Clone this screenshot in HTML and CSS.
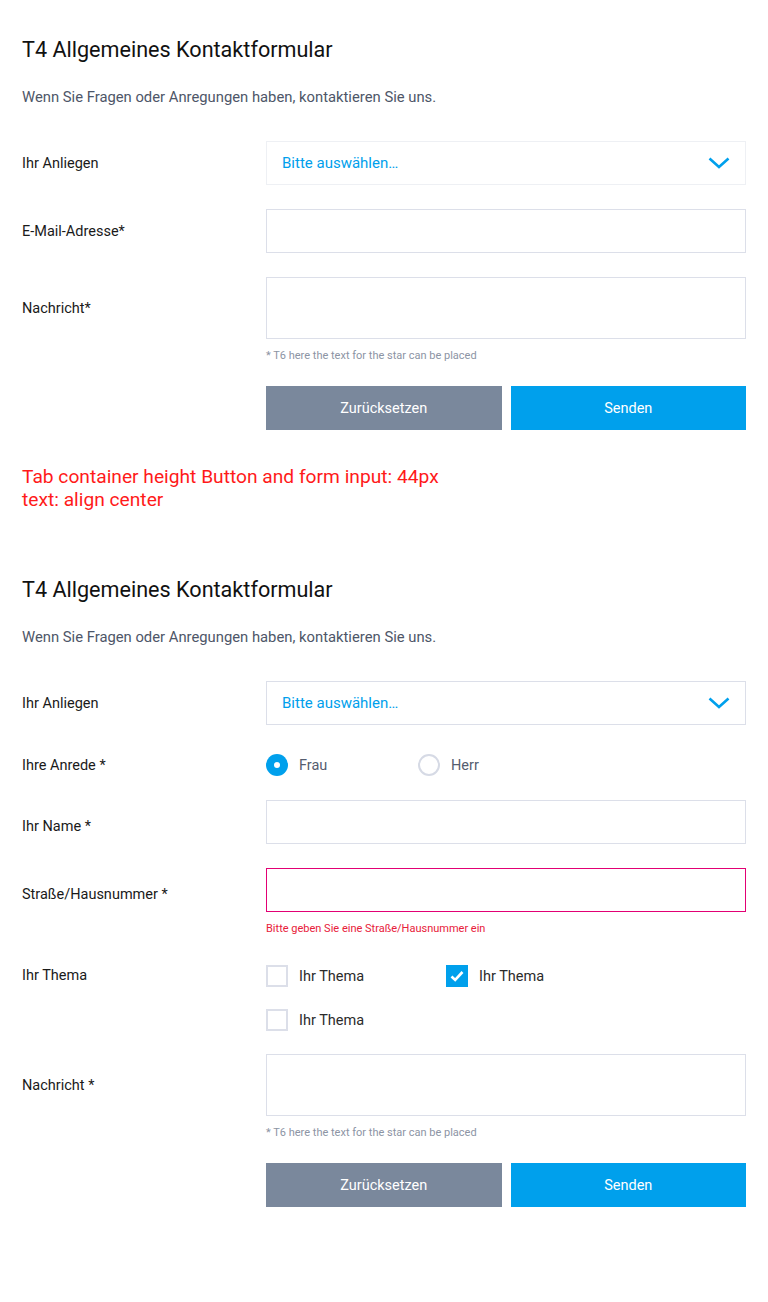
FILE: index.html
```html
<!DOCTYPE html>
<html lang="de">
<head>
    <meta charset="UTF-8">
    <meta name="viewport" content="width=device-width, initial-scale=1.0">
    <title>Kontaktformular</title>
    <link rel="stylesheet" href="styles.css">
</head>
<body>
    <div class="page">
        <form class="contact-form">
            <h1>T4 Allgemeines Kontaktformular</h1>
            <p class="intro">Wenn Sie Fragen oder Anregungen haben, kontaktieren Sie uns.</p>

            <div class="row">
                <label class="label">Ihr Anliegen</label>
                <div class="select">
                    <span>Bitte auswählen…</span>
                    <svg class="chevron" width="22" height="12" viewBox="0 0 22 12"><path d="M1.5 1.5 L11 10 L20.5 1.5" fill="none" stroke="#00a0ec" stroke-width="2.6"/></svg>
                </div>
            </div>
            <div class="row">
                <label class="label">E-Mail-Adresse*</label>
                <div class="input"></div>
            </div>
            <div class="row">
                <label class="label">Nachricht*</label>
                <div class="input textarea"></div>
            </div>
            <p class="hint">* T6 here the text for the star can be placed</p>
            <div class="buttons">
                <button type="button" class="btn reset">Zurücksetzen</button>
                <button type="button" class="btn send">Senden</button>
            </div>
        </form>

        <p class="note">Tab container height Button and form input: 44px<br>text: align center</p>

        <form class="contact-form second">
            <h1>T4 Allgemeines Kontaktformular</h1>
            <p class="intro">Wenn Sie Fragen oder Anregungen haben, kontaktieren Sie uns.</p>

            <div class="row">
                <label class="label">Ihr Anliegen</label>
                <div class="select outlined">
                    <span>Bitte auswählen…</span>
                    <svg class="chevron" width="22" height="12" viewBox="0 0 22 12"><path d="M1.5 1.5 L11 10 L20.5 1.5" fill="none" stroke="#00a0ec" stroke-width="2.6"/></svg>
                </div>
            </div>
            <div class="row radios">
                <label class="label">Ihre Anrede *</label>
                <div class="options">
                    <span class="option"><span class="radio checked"></span>Frau</span>
                    <span class="option"><span class="radio"></span>Herr</span>
                </div>
            </div>
            <div class="row">
                <label class="label low">Ihr Name *</label>
                <div class="input"></div>
            </div>
            <div class="row">
                <label class="label low">Straße/Hausnummer *</label>
                <div class="input error"></div>
            </div>
            <p class="error-text">Bitte geben Sie eine Straße/Hausnummer ein</p>
            <div class="row topics">
                <label class="label">Ihr Thema</label>
                <div class="checks">
                    <span class="check-item"><span class="checkbox"></span>Ihr Thema</span>
                    <span class="check-item"><span class="checkbox checked"><svg width="14" height="12" viewBox="0 0 14 12"><path d="M1.5 6.5 L5.2 10 L12.5 2" fill="none" stroke="#fff" stroke-width="2.6"/></svg></span>Ihr Thema</span>
                    <span class="check-item"><span class="checkbox"></span>Ihr Thema</span>
                </div>
            </div>
            <div class="row">
                <label class="label">Nachricht *</label>
                <div class="input textarea"></div>
            </div>
            <p class="hint">* T6 here the text for the star can be placed</p>
            <div class="buttons">
                <button type="button" class="btn reset">Zurücksetzen</button>
                <button type="button" class="btn send">Senden</button>
            </div>
        </form>
    </div>
</body>
</html>
```

FILE: styles.css
```css
body {
    margin: 0;
    background: #fff;
    font-family: Roboto, "Liberation Sans", sans-serif;
    color: #1a1a1a;
}
.page {
    width: 768px;
    padding: 36px 22px 60px;
    box-sizing: border-box;
}
h1 {
    margin: 0;
    font-size: 21.6px;
    line-height: 28px;
    font-weight: 400;
    color: #111;
}
.intro {
    margin: 23px 0 34px;
    font-size: 14.8px;
    line-height: 20px;
    color: #4e5668;
}
.row {
    display: flex;
    align-items: center;
    margin-bottom: 24px;
}
.label {
    width: 244px;
    flex-shrink: 0;
    font-size: 14.5px;
    color: #1a1a1a;
}
.label.low {
    padding-top: 8px;
}
.select, .input {
    flex: 1;
    height: 44px;
    box-sizing: border-box;
    border: 1px solid #dcdfe9;
    background: #fff;
}
.select {
    display: flex;
    align-items: center;
    justify-content: space-between;
    padding: 0 15px 0 15px;
    border-color: #eef0f4;
    font-size: 15px;
    color: #00a0ec;
}
.select.outlined {
    border-color: #dcdfe9;
}
.input.textarea {
    height: 62px;
}
.input.error {
    border-color: #e20074;
}
.hint {
    margin: -15px 0 22px 244px;
    font-size: 11px;
    line-height: 16px;
    color: #8c94a4;
}
.buttons {
    display: flex;
    gap: 9px;
    margin-left: 244px;
}
.btn {
    flex: 1;
    height: 44px;
    border: none;
    font-family: inherit;
    font-size: 14.5px;
    color: #fff;
    cursor: pointer;
}
.btn.reset {
    background: #7a889c;
}
.btn.send {
    background: #00a0ec;
}
.note {
    margin: 35px 0 0;
    font-size: 19.2px;
    line-height: 23px;
    color: #ff1a1a;
}
.second {
    margin-top: 65px;
}
.row.radios {
    margin-top: 29px;
}
.options {
    display: flex;
    font-size: 14.5px;
    color: #555d6f;
}
.option {
    display: flex;
    align-items: center;
    width: 152px;
}
.radio {
    width: 22px;
    height: 22px;
    box-sizing: border-box;
    border: 2px solid #d6dae5;
    border-radius: 50%;
    margin-right: 11px;
    position: relative;
}
.radio.checked {
    border: none;
    background: #00a0ec;
}
.radio.checked::after {
    content: "";
    position: absolute;
    left: 8px;
    top: 8px;
    width: 6px;
    height: 6px;
    border-radius: 50%;
    background: #fff;
}
.error-text {
    margin: -15px 0 28px 244px;
    font-size: 11px;
    line-height: 16px;
    color: #e8203a;
}
.row.topics {
    align-items: flex-start;
    margin-bottom: 23px;
}
.row.topics .label {
    line-height: 22px;
}
.checks {
    display: flex;
    flex-wrap: wrap;
    row-gap: 22px;
    font-size: 14.5px;
    color: #2b2b2b;
}
.check-item {
    display: flex;
    align-items: center;
    width: 180px;
}
.checkbox {
    width: 22px;
    height: 22px;
    box-sizing: border-box;
    border: 2px solid #dcdfe9;
    margin-right: 11px;
    display: flex;
    align-items: center;
    justify-content: center;
}
.checkbox.checked {
    border: none;
    background: #00a0ec;
}
```
